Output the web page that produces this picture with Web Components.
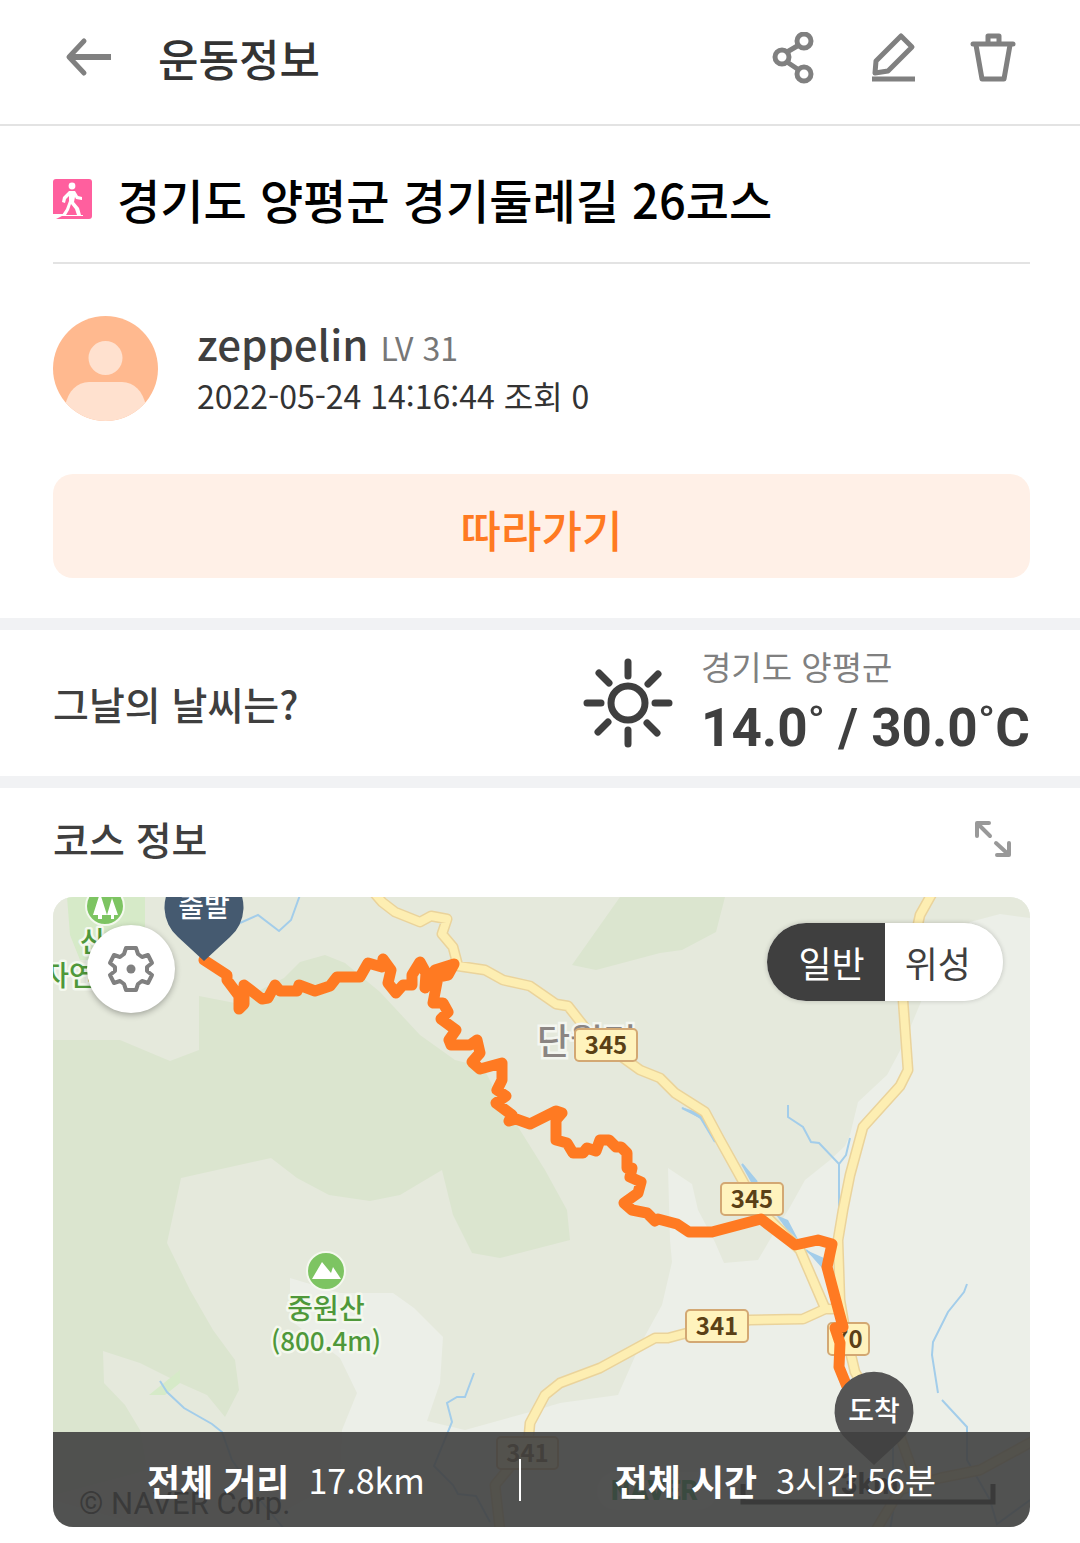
<!DOCTYPE html>
<html lang="ko">
<head>
<meta charset="utf-8">
<meta name="viewport" content="width=device-width, initial-scale=1">
<title>운동정보</title>
<style>
  :root {
    --ink: #3f3f3f;
    --muted: #808080;
    --line: #e3e3e3;
    --band: #f1f2f4;
    --accent: #ff7a22;
    --pad-start: 53px;
    --pad-end: 50px;
  }

  body {
    margin: 0;
    background: #fff;
    color: var(--ink);
    font-family: "Noto Sans CJK KR", "Noto Sans", sans-serif;
    font-weight: 500;
  }
</style>
</head>
<body>

<workout-page>
  <app-bar slot="header">운동정보</app-bar>
  <course-title>경기도 양평군 경기둘레길 26코스</course-title>
  <author-card name="zeppelin" level="LV 31">2022-05-24 14:16:44 조회 0</author-card>
  <follow-button>따라가기</follow-button>
  <weather-row place="경기도 양평군" temp="14.0˚ / 30.0˚C">그날의 날씨는?</weather-row>
  <course-section heading="코스 정보">
    <course-map>
      <map-stats slot="stats">
        <map-stat label="전체 거리">17.8km</map-stat>
        <map-stat label="전체 시간">3시간 56분</map-stat>
      </map-stats>
    </course-map>
  </course-section>
</workout-page>

<script>
/* Small base: every element renders one string into an open root. */
class BaseElement extends HTMLElement {
  constructor() {
    super();
    this.attachShadow({ mode: 'open' });
  }

  connectedCallback() {
    this.shadowRoot.innerHTML = `
      <style>
        :host { display: block; }
        * { box-sizing: border-box; }
        svg { display: block; }
        h1, h2, p { margin: 0; font-weight: inherit; }
        button {
          padding: 0;
          border: 0;
          background: none;
          color: inherit;
          font: inherit;
          cursor: pointer;
        }
        ${this.styles()}
      </style>
      ${this.render()}
    `;
  }

  attr(name) { return this.getAttribute(name) || ''; }
  styles() { return ''; }
  render() { return '<slot></slot>'; }
}

class WorkoutPage extends BaseElement {
  styles() {
    return `main { display: flex; flex-direction: column; }`;
  }

  render() {
    return `<slot name="header"></slot><main><slot></slot></main>`;
  }
}

// ─── HEADER ───────────────────────────────────────────────
class AppBar extends BaseElement {
  styles() {
    return `
      header {
        display: flex;
        align-items: center;
        height: 126px;
        padding: 0 63px 8px 64px;
        border-bottom: 2px solid var(--line);
      }
      h1 { flex: 1; margin-left: 46px; font-size: 44px; line-height: 64px; color: #333; }
      nav { display: flex; gap: 52px; }
      svg { width: 48px; height: 52px; fill: none; stroke: var(--muted); stroke-width: 5; }
    `;
  }

  render() {
    return `
      <header>
        <button aria-label="뒤로">
          <svg viewBox="0 0 48 52">
            <path d="M47 25H6" stroke-width="6"/>
            <path d="M20 9 5 25 20 41" stroke-width="5" stroke-linecap="round" stroke-linejoin="round"/>
          </svg>
        </button>
        <h1><slot></slot></h1>
        <nav>
          <button aria-label="공유">
            <svg viewBox="0 0 48 52">
              <circle cx="13" cy="25" r="7"/><circle cx="35" cy="9" r="7"/><circle cx="35" cy="42" r="7"/>
              <path d="m18 20 12-7M18 30l12 8"/>
            </svg>
          </button>
          <button aria-label="수정">
            <svg viewBox="0 0 48 52">
              <path d="M32 4 43 15 19 39 6 41 7 29Z" stroke-linejoin="round"/>
              <path d="M3 47h43"/>
            </svg>
          </button>
          <button aria-label="삭제">
            <svg viewBox="0 0 48 52" stroke-linejoin="round">
              <path d="M4 12h40" stroke-linecap="round"/>
              <path d="M19 11V4h11v7M7 13l6 34h22l6-34"/>
            </svg>
          </button>
        </nav>
      </header>
    `;
  }
}

// ─── TITLE ────────────────────────────────────────────────
class CourseTitle extends BaseElement {
  styles() {
    return `
      :host { padding: 0 var(--pad-end) 0 var(--pad-start); }
      .row {
        display: flex;
        align-items: center;
        gap: 24px;
        height: 138px;
        padding-top: 10px;
        border-bottom: 2px solid var(--line);
      }
      svg { flex: none; width: 40px; height: 40px; }
      h2 { font-size: 47px; line-height: 68px; color: #000; }
    `;
  }

  render() {
    return `
      <div class="row">
        <svg viewBox="0 0 40 40" aria-hidden="true">
          <rect width="39" height="40" rx="3" fill="#ff5f9e"/>
          <circle cx="19" cy="7" r="3.400" fill="#fff"/>
          <path d="M16 12h6l3 5 4 1v3l-6-1-1-2-1 5 5 6 2 7h-4l-2-6-4-5-2 6-3 5h-4l4-6 3-8v-5l-3 3-1 4-3-1 1-5Z" fill="#fff"/>
          <path d="M0 35h12v1h18v1H9l-6 3H0Z" fill="#fff"/>
        </svg>
        <h2><slot></slot></h2>
      </div>
    `;
  }
}

// ─── AUTHOR ───────────────────────────────────────────────
class AuthorCard extends BaseElement {
  styles() {
    return `
      :host { padding: 52px var(--pad-end) 53px var(--pad-start); }
      .row { display: flex; align-items: center; gap: 39px; }
      svg { flex: none; width: 105px; height: 105px; }
      p { line-height: 48px; }
      .name { font-size: 42px; }
      .level { margin-left: 12px; font-size: 32px; font-weight: 400; color: #777; }
      .meta { font-size: 32px; font-weight: 400; color: #333; }
    `;
  }

  render() {
    return `
      <div class="row">
        <svg viewBox="0 0 105 105" role="img" aria-label="프로필">
          <clipPath id="round"><circle cx="52.500" cy="52.500" r="52.500"/></clipPath>
          <g clip-path="url(#round)">
            <rect width="105" height="105" fill="#ffb98f"/>
            <circle cx="52.500" cy="42" r="17" fill="#ffe1cf"/>
            <path d="M12 105V90c3-15 12-24 24-24h33c12 0 21 9 24 24v15Z" fill="#ffe1cf"/>
          </g>
        </svg>
        <div>
          <p class="name">${this.attr('name')}<span class="level">${this.attr('level')}</span></p>
          <p class="meta"><slot></slot></p>
        </div>
      </div>
    `;
  }
}

class FollowButton extends BaseElement {
  styles() {
    return `
      :host { padding: 0 var(--pad-end) 40px var(--pad-start); }
      button {
        width: 100%;
        padding: 23px 0 17px;
        border-radius: 20px;
        background: #fff0e7;
        color: var(--accent);
        font-size: 44px;
        line-height: 64px;
      }
    `;
  }

  render() { return `<button><slot></slot></button>`; }
}

// ─── WEATHER ──────────────────────────────────────────────
class WeatherRow extends BaseElement {
  styles() {
    return `
      section {
        display: flex;
        align-items: center;
        padding: 11px var(--pad-end) 11px var(--pad-start);
        border: solid var(--band);
        border-width: 12px 0;
      }
      h2 { flex: 1; font-size: 39px; line-height: 56px; }
      svg { flex: none; width: 90px; height: 90px; margin-right: 28px; }
      .place { font-size: 33px; font-weight: 400; line-height: 50px; color: #808080; }
      .temp { font: 700 53px/74px Roboto, "Noto Sans CJK KR", sans-serif; white-space: nowrap; }
    `;
  }

  render() {
    return `
      <section>
        <h2><slot></slot></h2>
        <svg viewBox="-45 -45 90 90" fill="none" stroke="#3f3f3f" stroke-width="7" stroke-linecap="round" role="img" aria-label="맑음">
          <circle r="17"/>
          <path d="M0-41v14M0 27v14M-41 0h14M27 0h14M-29-30l10 10M30-29 20-19M-30 29l10-10M29 30 19 20"/>
        </svg>
        <div>
          <p class="place">${this.attr('place')}</p>
          <p class="temp">${this.attr('temp')}</p>
        </div>
      </section>
    `;
  }
}

// ─── COURSE ───────────────────────────────────────────────
class CourseSection extends BaseElement {
  styles() {
    return `
      :host { padding: 0 var(--pad-end) 16px var(--pad-start); }
      header {
        display: flex;
        align-items: center;
        justify-content: space-between;
        height: 109px;
        padding: 0 18px 10px 0;
      }
      h2 { font-size: 39px; line-height: 56px; }
      svg { width: 38px; height: 38px; }
    `;
  }

  render() {
    return `
      <header>
        <h2>${this.attr('heading')}</h2>
        <button aria-label="크게 보기">
          <svg viewBox="0 0 38 38" fill="none" stroke="#999" stroke-width="4" stroke-linecap="round" stroke-linejoin="round">
            <path d="M3 17V4h12M4 5l12 12M23 36h12V24M34 35 22 24"/>
          </svg>
        </button>
      </header>
      <slot></slot>
    `;
  }
}

class MapStats extends BaseElement {
  styles() {
    return `
      :host { display: flex; align-items: center; height: 95px; background: rgba(64, 64, 64, 0.9); color: #fff; }
      ::slotted(*) { flex: auto; }
    `;
  }
}

class MapStat extends BaseElement {
  styles() {
    return `
      :host { display: flex; justify-content: center; align-items: center; gap: 19px; height: 42px; white-space: nowrap; }
      :host(:not(:first-child)) { border-left: 2px solid #fff; }
      .label { font-size: 36px; line-height: 42px; font-weight: 700; }
      .value { font-size: 34px; line-height: 42px; font-weight: 400; }
    `;
  }

  render() {
    return `<span class="label">${this.attr('label')}</span><span class="value"><slot></slot></span>`;
  }
}

const ROADS = [
  'M370 888 382 902 395 912 420 922 431 916 447 919 442 934 453 947 458 966 485 970 503 980 530 986 556 1004 568 1006 590 1034 640 1070 660 1078 675 1093 705 1112 720 1140 745 1185 765 1215 800 1250 825 1308',
  'M934 890 920 915 914 942 903 1000 908 1070 900 1086 863 1127 850 1175 843 1210 838 1240 840 1300 845 1330 855 1372 880 1415 900 1436 914 1475',
  'M838 1309H825L803 1319 750 1320 717 1325 668 1338H655L600 1368 560 1383 545 1395 530 1423 528 1445 495 1485 500 1530',
  'M876 1530 900 1490 940 1478 980 1470 1035 1440',
];

const STREAMS = [
  'M240 923 258 915 279 931 291 920 300 895',
  'M682 1108 700 1117 715 1142 M742 1164 757 1182',
  'M788 1105v12l15 10 8 15 8 1 20 21 7-9 4-17M839 1164v50l-2 16',
  'M779 1217 795 1240 M806 1250 822 1263',
  'M160 1381 167 1392 184 1408 212 1424 222 1432 232 1460 260 1500 285 1530',
  'M474 1373 465 1397H457L447 1403 452 1422 434 1466 453 1485 458 1494 476 1496 490 1522',
  'M967 1284 964 1292 948 1312 933 1342 932 1355 938 1393M942 1400 967 1427V1460L990 1500 997 1524 1030 1500',
  'M893 1440 893 1475 M895 1500 890 1530',
];

const ROUTE = 'M204 960 227 975 227 980 239 996 239 1009 244 1004 244 985 262 999 268 998 275 985 280 991 297 991 '
  + '299 985 315 991 330 986 337 977 360 977 368 963 382 967 383 959 391 970 388 983 396 993 403 985 412 985 '
  + '412 975 420 962 426 973 425 988 435 970 454 964 448 975 438 977 433 1003 443 1003 448 1012 441 1019 '
  + '456 1030 449 1040 451 1045 470 1045 477 1040 480 1053 472 1062 480 1069 502 1063 502 1080 497 1090 '
  + '506 1096 496 1103 512 1115 509 1121 516 1119 530 1124 556 1111 562 1113 556 1120 556 1140 567 1143 573 1153 '
  + '583 1153 587 1148 596 1151 600 1140 609 1140 616 1147 621 1147 627 1153 627 1168 632 1168 630 1177 '
  + '641 1182 638 1193 624 1203 632 1210 647 1213 655 1221 658 1219 677 1224 689 1232 712 1232 761 1219 '
  + '795 1245 818 1240 832 1244 827 1267 843 1327 835 1328 840 1343 839 1367 848 1389';

const SHIELDS = [
  { x: 575, y: 1029, w: 62, no: '345' },
  { x: 721, y: 1183, w: 62, no: '345' },
  { x: 686, y: 1310, w: 62, no: '341' },
  { x: 497, y: 1437, w: 61, no: '341' },
  { x: 828, y: 1323, w: 41, no: '70' },
];

class CourseMap extends BaseElement {
  styles() {
    return `
      :host {
        position: relative;
        overflow: hidden;
        border-radius: 20px;
        background: #ecefe8;
      }
      .map { width: 100%; height: 630px; }
      .settings {
        position: absolute;
        top: 28px;
        left: 34px;
        display: grid;
        place-items: center;
        width: 88px;
        height: 88px;
        border-radius: 50%;
        background: #fff;
        box-shadow: 0 2px 6px rgba(0, 0, 0, 0.3);
      }
      .settings svg { width: 48px; height: 48px; }
      fieldset {
        position: absolute;
        top: 26px;
        right: 27px;
        display: flex;
        margin: 0;
        padding: 0;
        border: 0;
        border-radius: 40px;
        overflow: hidden;
        background: #fff;
        box-shadow: 0 0 5px rgba(0, 0, 0, 0.2);
        font-size: 36px;
        font-weight: 400;
        line-height: 78px;
      }
      label { padding: 0 32px 0 20px; }
      label:first-of-type { padding: 0 20px 0 32px; }
      label:has(:checked) { background: #3f3f3f; color: #fff; }
      input { position: absolute; opacity: 0; }
      ::slotted([slot="stats"]) { position: absolute; inset: auto 0 0; }
      .land { fill: #e5e9dc; }
      .forest { fill: #dbe5cf; }
      .place { fill: #4f983a; stroke: #f4f8ee; stroke-width: 5; paint-order: stroke; stroke-linejoin: round; font-size: 28px; text-anchor: middle; }
      .height { font-size: 26px; }
      .town { fill: #8b8583; stroke: #f4f6f0; stroke-width: 5; paint-order: stroke; font-size: 36px; }
      .shield { fill: #5a4016; font-size: 24px; font-weight: 700; text-anchor: middle; }
      .pin { fill: #fff; font-size: 28px; text-anchor: middle; }
    `;
  }

  _shield({ x, y, w, no }) {
    return `
      <rect x="${x}" y="${y}" width="${w}" height="32" rx="4" fill="#fff3bd" stroke="#d3a873" stroke-width="2"/>
      <text class="shield" x="${x + w / 2}" y="${y + 25}">${no}</text>
    `;
  }

  _pin(x, y, color, text) {
    return `
      <g transform="translate(${x} ${y})">
        <path d="M0 54-26 30A39.500 39.500 0 1 1 26 30Z" fill="${color}"/>
        <text class="pin" y="10">${text}</text>
      </g>
    `;
  }

  render() {
    const road = ROADS.join('');
    return `
      <svg class="map" viewBox="53 897 977 630" preserveAspectRatio="xMidYMid slice" role="img" aria-label="코스 지도">
        <!-- terrain -->
        <path class="land" d="M53 897H1030V918L1000 914 970 922 930 980 903 1045 887 1075 858 1102 850 1135 845 1146 830 1160 805 1180 790 1207 772 1236 758 1260 724 1263 714 1240 698 1210 692 1184 668 1168 670 1240 672 1262 662 1305 640 1345 618 1395 560 1403 530 1412 465 1430 427 1421 440 1383 443 1337 414 1308 393 1293H340L290 1278V1320L340 1358 357 1393 342 1430 340 1480 250 1530H160L53 1500Z"/>
        <path class="forest" d="M53 1040H120L170 1061 199 1050V996L235 1003 284 978 300 962 325 955 345 963 380 992 420 1035 455 1060 483 1067 500 1100 520 1130 545 1170 567 1210 570 1240 500 1258 472 1253 453 1215 442 1170 400 1195 370 1201 329 1195 297 1178 271 1158 181 1178 167 1243 190 1290 213 1330 235 1360 239 1390 225 1417 207 1395 180 1383 140 1363 103 1351 104 1383 125 1405 140 1430 147 1470 53 1495ZM620 897H725L716 932 682 950 660 953 596 970 572 965Z"/>
        <path d="M67 897H145V930L100 960H80L70 935ZM180 1370V1383L165 1395H149Z" fill="#d6eac8"/>
        <path d="${STREAMS.join('')}" fill="none" stroke="#a3cdea" stroke-width="2"/>
        <path d="M681 1107 704 1114 722 1148 702 1120ZM741 1164 759 1184H752ZM776 1215 788 1220 800 1243ZM806 1250 824 1258 822 1268Z" fill="#a3cdea"/>

        <!-- roads -->
        <g fill="none" stroke-linejoin="round">
          <path d="${road}" stroke="#ead39b" stroke-width="11"/>
          <path d="${road}" stroke="#fdeeb2" stroke-width="8"/>
        </g>

        <text class="town" x="537" y="1055">단월면</text>
        ${SHIELDS.map(this._shield).join('')}

        <!-- places -->
        <circle cx="105" cy="906" r="19" fill="#7dc462" stroke="#f4f8ee" stroke-width="2"/>
        <path d="m100 893-7 22h5v4h4v-4h5ZM112 898l-5 17h4v4h3v-4h4Z" fill="#fff"/>
        <text class="place" x="93" y="952">산</text>
        <text class="place" x="69" y="986">자연</text>
        <circle cx="326" cy="1271" r="19" fill="#7dc462" stroke="#f4f8ee" stroke-width="2"/>
        <path d="m312 1279 10-17 9 11 2-6 8 12Z" fill="#fff"/>
        <text class="place" x="326" y="1319">중원산</text>
        <text class="place height" x="326" y="1351">(800.4m)</text>

        <path d="${ROUTE}" fill="none" stroke="#ff7a22" stroke-width="11" stroke-linecap="round" stroke-linejoin="round"/>
        ${this._pin(204, 907, '#455a70', '출발')}
        ${this._pin(874, 1411, '#555', '도착')}

        <!-- attribution and scale -->
        <text x="79" y="1514" font-family="Roboto" font-size="31" font-weight="400">© NAVER Corp.</text>
        <rect x="597" y="1472" width="120" height="38" rx="19" fill="#fff" opacity="0.5"/>
        <text x="611" y="1500" font-family="Roboto" font-size="27" font-weight="900" fill="#03a040">NAVER</text>
        <text x="841" y="1494" font-family="Roboto" font-size="29" font-weight="700">3km</text>
        <path d="M743 1484v18h250v-18" fill="none" stroke="#000" stroke-width="5"/>
      </svg>

      <slot name="stats"></slot>

      <button class="settings" aria-label="지도 설정">
        <svg viewBox="-24 -24 48 48" fill="none" stroke="#808080" stroke-width="4" stroke-linejoin="round">
          <path d="M-5-21H5L7-15 11-12 17-14 21-6 16-2V2L21 6 17 14 11 12 7 15 5 21H-5L-7 15-11 12-17 14-21 6-16 2V-2L-21-6-17-14-11-12-7-15Z"/>
          <circle r="4.500" fill="#808080" stroke="none"/>
        </svg>
      </button>

      <fieldset aria-label="지도 종류">
        <label><input type="radio" name="kind" checked>일반</label>
        <label><input type="radio" name="kind">위성</label>
      </fieldset>
    `;
  }
}

customElements.define('workout-page', WorkoutPage);
customElements.define('app-bar', AppBar);
customElements.define('course-title', CourseTitle);
customElements.define('author-card', AuthorCard);
customElements.define('follow-button', FollowButton);
customElements.define('weather-row', WeatherRow);
customElements.define('course-section', CourseSection);
customElements.define('map-stats', MapStats);
customElements.define('map-stat', MapStat);
customElements.define('course-map', CourseMap);
</script>
</body>
</html>
